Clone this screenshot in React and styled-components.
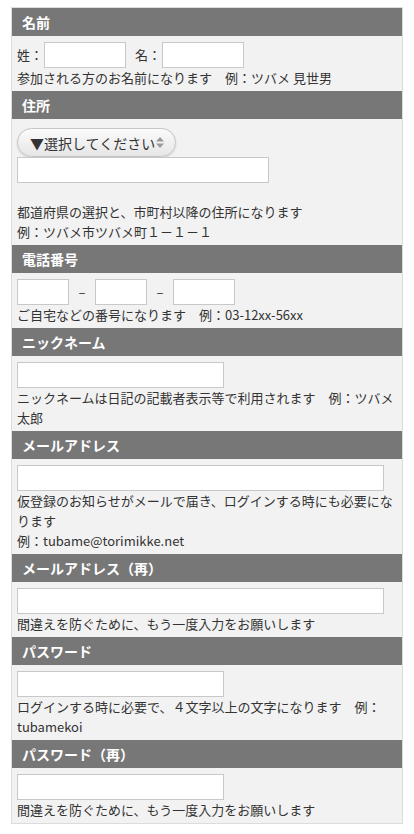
import styled, { createGlobalStyle } from 'styled-components'

const GlobalStyle = createGlobalStyle`
  body {
    margin: 0;
    background: #fff;
    font-family: "Noto Sans CJK JP", "Noto Sans", sans-serif;
    font-size: 13px;
    color: #333;
  }
`

const Form = styled.div`
  margin: 7px 11px 10px 11px;
  border: 1px solid #dcdcdc;
  background: #f2f2f2;
`

const Header = styled.div`
  height: 28px;
  line-height: 28px;
  padding: 0 10px;
  background: #777;
  color: #fff;
  font-weight: bold;
  font-size: 14px;
`

const Body = styled.div`
  padding: ${p => (p.$top ? p.$top : 6)}px 5px 3px 5px;
  line-height: 20px;
`

const Row = styled.div`
  display: flex;
  align-items: center;
  height: 26px;
`

const Label = styled.span`
  margin-right: ${p => p.$gap || 0}px;
  margin-left: ${p => p.$left || 0}px;
`

const Input = styled.input`
  display: block;
  box-sizing: border-box;
  width: ${p => p.$w}px;
  height: 26px;
  margin: 0;
  border: 1px solid #c8c8c8;
  background: #fff;
  font: inherit;
`

const Dash = styled.span`
  width: 26px;
  text-align: center;
  font-size: 13px;
`

const Select = styled.button`
  display: flex;
  align-items: center;
  box-sizing: border-box;
  width: 159px;
  height: 29px;
  padding: 0 8px 0 12px;
  border: 1px solid #c4c4c4;
  border-radius: 15px;
  background: linear-gradient(#fbfbfb, #e6e6e6);
  box-shadow: 0 1px 2px rgba(0, 0, 0, 0.15);
  font-family: inherit;
  font-size: 14px;
  color: #333;
`

const Help = styled.div`
  margin-top: ${p => p.$gap || 0}px;
`

function Arrows() {
  return (
    <svg width="10" height="13" viewBox="0 0 10 13">
      <path d="M5 1 L9 5.5 L1 5.5 Z" fill="#999" />
      <path d="M5 12 L9 7.5 L1 7.5 Z" fill="#999" />
    </svg>
  )
}

export default function App() {
  return (
    <>
      <GlobalStyle />
      <Form>
        <Header>名前</Header>
        <Body>
          <Row>
            <Label $gap={1}>姓：</Label>
            <Input $w={82} />
            <Label $left={9} $gap={1}>名：</Label>
            <Input $w={82} />
          </Row>
          <Help>参加される方のお名前になります　例：ツバメ 見世男</Help>
        </Body>

        <Header>住所</Header>
        <Body $top={9}>
          <Select>▼選択してください<Arrows /></Select>
          <Input $w={252} />
          <Help $gap={19}>都道府県の選択と、市町村以降の住所になります</Help>
          <Help>例：ツバメ市ツバメ町１－１－１</Help>
        </Body>

        <Header>電話番号</Header>
        <Body>
          <Row>
            <Input $w={52} />
            <Dash>–</Dash>
            <Input $w={52} />
            <Dash>–</Dash>
            <Input $w={62} />
          </Row>
          <Help>ご自宅などの番号になります　例：03-12xx-56xx</Help>
        </Body>

        <Header>ニックネーム</Header>
        <Body>
          <Input $w={207} />
          <Help>ニックネームは日記の記載者表示等で利用されます　例：ツバメ太郎</Help>
        </Body>

        <Header>メールアドレス</Header>
        <Body>
          <Input $w={367} />
          <Help>仮登録のお知らせがメールで届き、ログインする時にも必要になります</Help>
          <Help>例：tubame@torimikke.net</Help>
        </Body>

        <Header>メールアドレス（再）</Header>
        <Body>
          <Input $w={367} />
          <Help>間違えを防ぐために、もう一度入力をお願いします</Help>
        </Body>

        <Header>パスワード</Header>
        <Body>
          <Input $w={207} />
          <Help>ログインする時に必要で、４文字以上の文字になります　例：tubamekoi</Help>
        </Body>

        <Header>パスワード（再）</Header>
        <Body>
          <Input $w={207} />
          <Help>間違えを防ぐために、もう一度入力をお願いします</Help>
        </Body>
      </Form>
    </>
  )
}
